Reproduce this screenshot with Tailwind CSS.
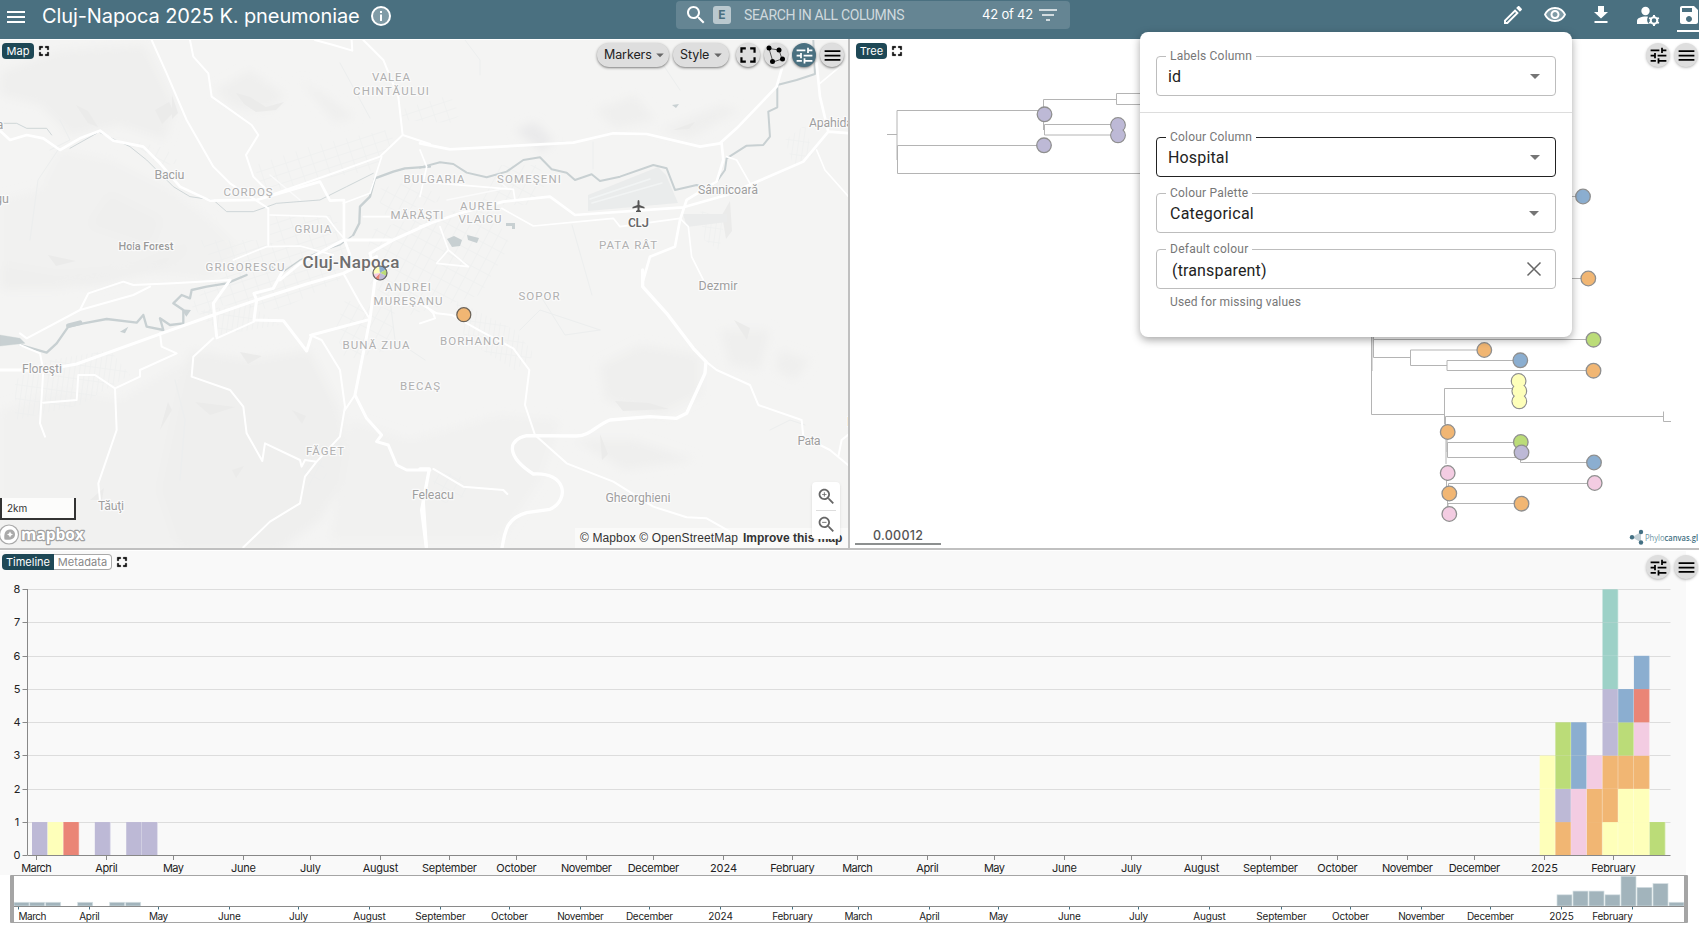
<!DOCTYPE html>
<html lang="en">
<head>
<meta charset="utf-8">
<title>Cluj-Napoca 2025 K. pneumoniae</title>
<script src="https://cdn.jsdelivr.net/npm/@tailwindcss/browser@4"></script>
</head>
<body class="w-[1699px] h-[925px] overflow-hidden bg-white font-['Inter','Liberation_Sans',sans-serif] text-[#222]">

<svg class="hidden">
  <defs>
    <symbol id="menu" viewBox="0 0 24 24"><path d="M3 18h18v-2H3v2zm0-5h18v-2H3v2zm0-7v2h18V6H3z"/></symbol>
    <symbol id="full" viewBox="0 0 24 24"><path d="M7 14H5v5h5v-2H7v-3zm-2-4h2V7h3V5H5v5zm12 7h-3v2h5v-5h-2v3zM14 5v2h3v3h2V5h-5z"/></symbol>
    <symbol id="tune" viewBox="0 0 24 24"><path d="M3 17v2h6v-2H3zM3 5v2h10V5H3zm10 16v-2h8v-2h-8v-2h-2v6h2zM7 9v2H3v2h4v2h2V9H7zm14 4v-2H11v2h10zm-6-4h2V7h4V5h-4V3h-2v6z"/></symbol>
    <symbol id="search" viewBox="0 0 24 24"><path d="M15.5 14h-.79l-.28-.27C15.41 12.59 16 11.11 16 9.5 16 5.91 13.09 3 9.5 3S3 5.91 3 9.5 5.91 16 9.5 16c1.61 0 3.09-.59 4.23-1.57l.27.28v.79l5 4.99L20.49 19l-4.99-5zm-6 0C7.01 14 5 11.99 5 9.5S7.01 5 9.5 5 14 7.01 14 9.5 11.99 14 9.5 14z"/></symbol>
    <symbol id="caret" viewBox="0 0 24 24"><path d="M7 10l5 5 5-5z"/></symbol>
  </defs>
</svg>

<div class="relative flex h-[925px] flex-col">
  <!-- Header -->
  <header class="flex h-[39px] shrink-0 items-start bg-[#4a7080] text-white">
    <div class="flex w-[676px] items-center pl-1">
      <svg class="mt-[3px] size-6 fill-white"><use href="#menu"/></svg>
      <h1 class="ml-[14px] mt-px w-[317px] whitespace-nowrap text-[20px] leading-[30px] tracking-[-0.1px]">Cluj-Napoca 2025 K. pneumoniae</h1>
      <svg class="ml-[12px] h-5 w-5 shrink-0" viewBox="0 0 20 20"><circle cx="10" cy="10" r="9" fill="#fff" fill-opacity=".3" stroke="#fff" stroke-width="2"/><path d="M9 5h2v2H9zM9 8.5h2V15H9z" fill="#fff"/></svg>
    </div>
    <div class="mt-px flex h-7 w-[394px] items-center rounded bg-white/15 pl-[8px] pr-[10px]">
      <svg class="size-6 fill-white"><use href="#search"/></svg>
      <span class="ml-[5px] flex size-[18px] items-center justify-center rounded-[3px] bg-white/55 text-[12px] font-bold text-[#4a7080]">E</span>
      <span class="ml-[13px] whitespace-nowrap font-[Roboto,sans-serif] text-[14px] tracking-[-0.33px] text-white/70">SEARCH IN ALL COLUMNS</span>
      <span class="ml-auto whitespace-nowrap text-[13px] tracking-[-0.2px]">42 of 42</span>
      <svg class="ml-[3px] size-6 fill-white/70"><path d="M10 18h4v-2h-4v2zM3 6v2h18V6H3zm3 7h12v-2H6v2z"/></svg>
    </div>
    <div class="ml-auto mt-[3px] flex w-[198px] shrink-0 gap-[18px] fill-white">
      <svg class="h-6 w-6 shrink-0" viewBox="0 0 24 24"><path d="M14.06 9.02l.92.92L5.92 19H5v-.92l9.06-9.06M17.66 3c-.25 0-.51.1-.7.29l-1.83 1.83 3.75 3.75 1.83-1.83c.39-.39.39-1.02 0-1.41l-2.34-2.34c-.2-.2-.45-.29-.71-.29zm-3.6 3.19L3 17.25V21h3.75L17.81 9.94l-3.75-3.75z"/></svg>
      <svg class="h-6 w-6 shrink-0" viewBox="0 0 24 24"><path fill-opacity=".3" d="M12 6c3.79 0 7.17 2.13 8.82 5.5C19.17 14.87 15.79 17 12 17s-7.17-2.13-8.82-5.5C4.83 8.13 8.21 6 12 6"/><path d="M12 6c3.79 0 7.17 2.13 8.82 5.5C19.17 14.87 15.79 17 12 17s-7.17-2.13-8.82-5.5C4.83 8.13 8.21 6 12 6m0-2C7 4 2.73 7.11 1 11.5 2.73 15.89 7 19 12 19s9.27-3.11 11-7.5C21.27 7.11 17 4 12 4zm0 5c1.38 0 2.5 1.12 2.5 2.5S13.38 14 12 14s-2.5-1.12-2.5-2.5S10.62 9 12 9m0-2c-2.48 0-4.5 2.02-4.5 4.5S9.52 16 12 16s4.5-2.02 4.5-4.5S14.48 7 12 7z"/></svg>
      <svg class="ml-[4px] h-6 w-6 shrink-0" viewBox="0 0 24 24"><path d="M9 3h6v6h4l-7 6.5L5 9h4zM5.500 18h13v2h-13z"/></svg>
      <svg class="ml-[5px] h-6 w-6 shrink-0" viewBox="0 0 24 24"><circle cx="9.500" cy="8" r="4.200"/><path d="M1 21v-3c0-3 4-4.500 9-4.500 1 0 1.500 0 2 .2-1.500 2.500-1 5.500 1 7.300z"/><circle cx="18" cy="17.500" r="3.300" fill="none" stroke="#fff" stroke-width="2"/><path d="M18 12v3M18 20v3M13.200 14.800l2.600 1.500M20.200 18.700l2.600 1.500M22.800 14.800l-2.600 1.500M15.800 18.700l-2.600 1.500" stroke="#fff" stroke-width="2"/></svg>
      <div class="-ml-[1px] w-6 shrink-0"><svg class="size-6" viewBox="0 0 24 24"><path d="M17 3H5c-1.110 0-2 .9-2 2v14c0 1.100.89 2 2 2h14c1.100 0 2-.9 2-2V7l-4-4zm-5 16c-1.660 0-3-1.340-3-3s1.340-3 3-3 3 1.340 3 3-1.340 3-3 3zm3-10H5V5h10v4z"/></svg><div class="mt-[3px] h-[2px] bg-white"></div></div>
    </div>
  </header>

  <div class="flex h-[509px] shrink-0">
    <!-- Map pane -->
    <section class="relative h-[509px] w-[848px] shrink-0 overflow-hidden border-t border-white bg-[#f4f4f3]">
      <svg class="absolute left-0 top-0" width="848" height="508" viewBox="0 40 848 508" fill="none" stroke-linejoin="round" stroke-linecap="round">
        <defs>
          <filter id="b" x="-20%" y="-20%" width="140%" height="140%"><feGaussianBlur stdDeviation="5"/></filter>
          <pattern id="g1" width="13" height="9" patternUnits="userSpaceOnUse" patternTransform="rotate(-18)"><path d="M0 0H13M0 0V9" stroke="#ebeeee" stroke-width="1"/></pattern>
          <pattern id="g2" width="10" height="13" patternUnits="userSpaceOnUse" patternTransform="rotate(28)"><path d="M0 0H10M0 0V13" stroke="#ebeeee" stroke-width="1"/></pattern>
          <pattern id="g3" width="5" height="14" patternUnits="userSpaceOnUse" patternTransform="rotate(8)"><path d="M0 0H5M0 0V14" stroke="#ebeeee" stroke-width="1"/></pattern>
        </defs>
        <!-- terrain -->
        <g fill="#efefee" filter="url(#b)">
          <path d="M0 72L60 50 145 45 175 105 165 140 120 125 70 135 40 105 0 95z"/>
          <path d="M215 90L250 70 285 95 270 110 235 108zM300 80l25 15 30 22-20 5z"/>
          <path d="M60 150l50 10 60 30 40 30 30 30-30 30-90-10-60 20-60 0V200l40-10z" fill="#f1f1f0"/>
          <path d="M110 195l50 25-10 25-60-20zM0 265l60 10 70-5 60-25-30 25-60 15L0 290z"/>
          <path d="M0 410l60-20 60 10 50-30 40-20 30 30 20 30 20 60-20 78H0z" fill="#f1f1f0"/>
          <path d="M190 350l60 10 60-10 30 60 10 60-30 50-40 30H180l-20-60z"/>
          <path d="M350 420l60 20 90-25 60 5-20 60-40 60H330z" fill="#f1f1f0"/>
          <path d="M600 365l40-20 60 10 0 40-40 20-55-15zM720 330l50 0-10 40-30-5zM780 350l30 10-15 20-20-10z"/>
          <path d="M595 110l40-15 20 25-40 8zM660 130l60-25 20 5-50 28zM575 440l60 0 60 20-70 10z"/>
          <path d="M515 130l20-8 18 18-10 12z" fill="#eaeaeb"/>
        </g>
        <g fill="#ebebea">
          <path d="M236 93l14 4 16 10 18-5-8 8-20 2-12-8zM76 105l12 6 10 16-10-4zM155 110l14-8 5 10-12 12zM48 255l28 6-20 5zM172 95l6 18-6 6zM195 402l40 5-25 8zM615 401l34 2 20 6-46 2zM673 130l22-8-6 7zM734 320l16 8-3 12zM600 434l8 20-6 6zM722 215l8-14 2 30-6 8zM240 352l22 4-14 8zM90 500l14-12-2 12zM160 430l8-28 4 8zM292 410l14 6-4 8zM232 470l12-4-8 12z"/>
        </g>
        <!-- street grids -->
        <path d="M370 230l60-15 60-10 20 40-30 50-70 20-45-35zM375 190l40-10 30 20-60 15z" fill="url(#g2)"/>
        <path d="M200 240l60 0 40 10 50-5-10 35-60 30-60-5-10 20-20-20 30-30zM270 215l60 0 20 20-20 20-60-15z" fill="url(#g1)"/>
        <path d="M255 165l60-20 70-15 10 10-20 30-60 10-55 15zM400 110l50-15 10 20-10 8-50-3z" fill="url(#g1)"/>
        <path d="M500 165l40 0 5 20-10 20-55 0zM345 300l50 10-5 40-45 10-10-30z" fill="url(#g2)"/>
        <path d="M50 360l60-10 20 25-50 30-65 15V380zM200 310l50-5 30 20-60 10z" fill="url(#g3)"/>
        <path d="M455 300l60 30 20 25-20 15-50-30zM700 210l25 10-6 30-15-10zM785 140l20-15 8 30-20 10z" fill="url(#g3)"/>
        <path d="M430 470l30 5 10 20-30 10zM300 460l20-5 8 22-20 10zM130 140l35 8 15 15-20 3z" fill="url(#g2)"/>
        <!-- airport -->
        <path d="M588 195l70-28 8 8 12 28-90 8z" fill="#eaecec"/>
        <path d="M590 199l60-20M592 203l70-20" stroke="#f2f4f4" stroke-width="1.500"/>
        <path d="M683 214h44v8l-40 5z" fill="#ebecec"/>
        <!-- minor roads -->
        <g stroke="#fbfbfb" stroke-width="1.500">
          <path d="M447 200l60-12-10-8M300 200l-30-25"/>
        </g>
        <g stroke="#eceeee">
          <path d="M420 143l30 7 50-3 65-5M593 142v27M572 225l20 70M540 295l25 40 35-5M520 330l20-20 60 20M390 300l5 40 30 20M30 240l8-60 20-30M340 63l30 55M480 75v-15l-15-20M660 60l20 30M60 120l10 20-20 10M175 380l10 40-5 60M770 430l20-10 15 5"/>
        </g>
        <!-- water -->
        <g stroke="#c8d0d2">
          <g transform="scale(.3333)"><path stroke-width="7" d="M1290 500L1215 505 1180 515 1125 535 1110 590 1080 620 1078 670 1060 705"/><path stroke-width="4" d="M1060 705L1020 735 960 755 900 780 850 815 790 790"/><path stroke-width="2.500" d="M0 370H50L80 385 140 385 155 405 M300 398L390 440 440 480 520 560 570 590 640 600 680 635H760L830 610 960 600 1040 560 1120 520M210 445L290 400"/></g>
          <g transform="translate(420 0) scale(.3333)"><path d="M0 503L60 487 100 492 140 518 200 532 260 515 310 480 360 472 395 508 440 518 465 540 515 523 540 543 600 530 700 495 740 505 765 570 830 555 860 565 890 545 915 510 920 475 980 437 1030 435 1050 410 1045 335 1072 322 1072 255 1130 240 1185 222 1180 120" stroke-width="6"/></g>
          <g transform="translate(0 270) scale(.3333)"><path stroke-width="7" d="M740 15L680 40 620 50 575 60 570 85 545 75 520 100 550 120 550 160 510 165 480 145 490 180 440 170 430 135 410 158 320 147 250 160 205 170 170 220 140 248 60 225"/><path stroke-width="14" d="M205 167L240 158"/><path fill="#c8d0d2" d="M0 195L60 205 75 220 0 228z"/><path fill="#c8d0d2" stroke="none" d="M545 118l28 2-14 20zM360 185l25-15-10 20z"/></g>
          <path fill="#c8d0d2" stroke="none" d="M447 239l7-3 8 4-2 6-8 1zM467 235l12 3-2 5-9-3zM672 105l7-1-3 4zM506 223h9v6h-3v-3h-6z"/>
        </g>
        <!-- roads -->
        <g stroke="#fff">
          <g transform="scale(.3333)">
            <path stroke-width="8" d="M0 392L30 420 80 405 130 415 180 450 240 415 300 392 340 422 430 440 480 490 540 560 630 602 770 600 960 545 990 602 1032 600V715L1050 765"/>
            <path stroke-width="6" d="M455 120L500 220 560 360 640 500 690 550 805 625 805 735M570 120L580 170 625 220 635 290 755 375 775 405 738 465 760 530 800 570M770 600L1000 520 1140 470 1208 405 1195 290 1150 180 1090 120M1208 405L1290 432M945 120L1000 135 1057 152 1055 120"/>
            <path stroke-width="9" d="M840 840L900 790 1030 720 1180 720 1290 670M1180 720L1110 760 1130 840"/>
            <path stroke-width="5" d="M810 645L980 650 1010 690 1032 715M700 780L800 740 900 738 1000 765M1290 650H1090M1145 470L1110 580 1030 610"/>
          </g>
          <g transform="translate(420 0) scale(.3333)">
            <path stroke-width="8" d="M0 680L120 640 250 605 390 590 465 645 790 622 920 585 1000 550 1150 485 1225 395 1290 400M1150 130L1090 190 1070 260 950 385 900 430 840 440 680 402 580 400 460 428 90 448 0 430M1190 190L1200 290 1225 395M905 430L910 480 890 545 800 600 780 660 765 740 690 770 670 840"/>
            <path stroke-width="5" d="M0 545L280 568 285 600M245 625L340 678 580 655 600 680 780 655 805 680 815 770 850 840M920 470L950 480 990 550M1190 450L1215 510 1290 595M1200 250L1260 200M0 450L20 500 0 590M60 680L85 750 145 800 50 790 85 750"/>
          </g>
          <g transform="translate(0 270) scale(.3333)">
            <path stroke-width="9" d="M0 300H130L230 282 500 185 640 135 770 90 920 42 1030 10 1130 -40M770 90L762 150 850 152 920 243 935 195 1110 148 1125 30M1110 148L1065 375 1100 445 1145 495 1130 515 1165 525 1190 585 1220 600H1290M1270 690L1280 840M770 90L762 70 820 55 850 0M690 30L640 100 650 200"/>
            <path stroke-width="6" d="M640 205L580 260 575 320 690 360 730 410 740 490 787 573 795 520 900 570 905 590 915 570 950 575 915 620 900 700 810 755 730 832M950 575L1020 500 1035 410 1020 300 965 210 930 195M1065 375L1035 420M650 205L762 155M345 355L350 480 295 640 300 690M130 300L120 460 135 500M130 398L230 390 235 315 285 315 345 355 420 320 420 300 530 250 485 230 480 190M60 190L80 205 240 120 265 70 370 35 400 45 520 40 690 30M240 120L400 75 450 50M60 225L120 250 130 300M1030 10L1080 100 1110 148"/>
          </g>
          <g transform="translate(420 270) scale(.3333)">
            <path stroke-width="10" d="M668 0V50L740 130 820 235 858 275 855 310 800 430 770 445 690 440 570 450C530 465 510 498 470 498L320 497C260 510 260 560 340 612 C440 605 450 690 390 718 L320 728C260 745 255 780 245 840M0 597H28L5 720 20 840"/>
            <path stroke-width="6" d="M0 100L50 130 95 135 185 185 280 235 328 300 315 405 345 495 440 580 580 635 700 710 800 742 860 745 930 785M858 275L890 300 990 345 1015 405 1145 450 1150 500 1230 540 1290 590M1255 560L1265 510 1290 490M40 597L130 650 250 660 262 672M0 160L45 145 40 130 0 90"/>
          </g>
        </g>
        <!-- place names -->
        <g font-family="Roboto, sans-serif" fill="#b0b0b0" stroke="#fafafa" stroke-width="2.500" paint-order="stroke" text-anchor="middle" font-size="11.500">
          <text x="391" y="81" textLength="38">VALEA</text><text x="391" y="95" textLength="76">CHINTĂULUI</text>
          <text x="248" y="196" textLength="49">CORDOŞ</text><text x="434" y="183" textLength="61">BULGARIA</text>
          <text x="529" y="183" textLength="64">SOMEŞENI</text><text x="313" y="233" textLength="37">GRUIA</text>
          <text x="417" y="219" textLength="53">MĂRĂŞTI</text><text x="480" y="210" textLength="40">AUREL</text><text x="480" y="223" textLength="43">VLAICU</text>
          <text x="628" y="249" textLength="58">PATA RÂT</text><text x="245" y="271" textLength="79">GRIGORESCU</text>
          <text x="408" y="291" textLength="46">ANDREI</text><text x="408" y="305" textLength="69">MUREŞANU</text>
          <text x="539" y="300" textLength="41">SOPOR</text><text x="472" y="345" textLength="64">BORHANCI</text>
          <text x="376" y="349" textLength="67">BUNĂ ZIUA</text><text x="420" y="390" textLength="40">BECAŞ</text><text x="325" y="455" textLength="38">FĂGET</text>
          <g font-size="12.500" fill="#9e9e9e">
            <text x="169.500" y="179" textLength="30">Baciu</text><text x="728" y="194" textLength="60">Sânnicoară</text><text x="831" y="126.500" textLength="44">Apahida</text>
            <text x="718" y="290" textLength="39">Dezmir</text><text x="42" y="373" textLength="40">Floreşti</text><text x="111" y="510" textLength="26">Tăuţi</text>
            <text x="433" y="499" textLength="42">Feleacu</text><text x="638" y="502" textLength="65">Gheorghieni</text><text x="809" y="445" textLength="23">Pata</text>
            <text x="2" y="203">gu</text><text x="0" y="129">a</text><text x="851" y="426">D</text>
          </g>
          <text x="146" y="250" font-size="11" font-weight="500" fill="#999" textLength="55">Hoia Forest</text>
          <text x="351" y="268" font-size="17" font-weight="500" fill="#6e6e6e" textLength="97">Cluj-Napoca</text>
          <text x="638.500" y="227" font-size="13" font-weight="500" fill="#666" textLength="21">CLJ</text>
        </g>
        <path d="M638.500 200q1 0 1 2v3l5 2v1.500l-5-1v2.500l1.500 1v1h-5v-1l1.500-1v-2.500l-5 1V207l5-2v-3q0-2 1-2z" fill="#555"/>
        <!-- markers -->
        <g transform="translate(380 273)">
          <path d="M0 0L-7 1A7 7 0 0 1 -1 -7z" fill="#feffba"/><path d="M0 0L-1 -7A7 7 0 0 1 6 -3.500z" fill="#8baed0"/><path d="M0 0L6 -3.500A7 7 0 0 1 6.500 3z" fill="#bbdc78"/><path d="M0 0L6.500 3A7 7 0 0 1 -1 7z" fill="#bdb9d6"/><path d="M0 0L-1 7A7 7 0 0 1 -5 5z" fill="#ea8576"/><path d="M0 0L-5 5A7 7 0 0 1 -7 1z" fill="#f3cce2"/>
          <circle r="7" stroke="#666" stroke-width="1.200"/>
        </g>
        <circle cx="463.800" cy="314.700" r="7" fill="#f1b673" stroke="#6b6257" stroke-width="1.200"/>
        <!-- mapbox logo -->
        <circle cx="9" cy="534.500" r="9.500" fill="#fff" stroke="#aaa" stroke-width="1.200"/>
        <path d="M4.500 539.500c-1-6 1-10 5.500-10 3 0 5 2 5 5 0 4.500-4.500 6-10.500 5z" fill="#aaa"/><path d="M10 531.500l1 2 2 1-2 1-1 2-1-2-2-1 2-1z" fill="#fff"/>
        <text x="21" y="539.500" font-family="Open Sans, sans-serif" font-weight="700" font-size="16" fill="#fff" stroke="#a0a0a0" stroke-width="2.400" paint-order="stroke" textLength="63" lengthAdjust="spacingAndGlyphs">mapbox</text>
      </svg>

      <!-- pane overlays -->
      <div class="absolute inset-x-0 top-[3px] flex items-start justify-between pl-[2px] pr-1">
        <div class="flex items-center gap-px"><span class="flex h-4 w-8 items-center justify-center rounded bg-[#1e4856] text-[11px] text-white">Map</span><svg class="ml-px size-[16px] fill-black stroke-black stroke-[0.7px]"><use href="#full"/></svg></div>
        <div class="flex gap-1 fill-black">
          <button class="flex h-6 w-[72px] items-center rounded-full bg-[#dedede] pl-[7px] text-[12.5px] tracking-[-0.1px] shadow-sm shadow-black/40">Markers<svg class="-ml-px size-[18px] shrink-0 fill-[#666]"><use href="#caret"/></svg></button>
          <button class="mr-[3px] flex h-6 w-[56px] items-center rounded-full bg-[#dedede] pl-[7px] text-[12.5px] tracking-[-0.1px] shadow-sm shadow-black/40">Style<svg class="size-[18px] shrink-0 fill-[#666]"><use href="#caret"/></svg></button>
          <span class="flex size-6 items-center justify-center rounded-full bg-[#dedede] shadow-sm shadow-black/40"><svg class="size-6" viewBox="1 1 22 22"><use href="#full" width="24" height="24"/></svg></span>
          <span class="flex size-6 items-center justify-center rounded-full bg-[#dedede] shadow-sm shadow-black/40"><svg class="size-6" viewBox="0 0 24 24"><path d="M5 5.500L15 7l3 9-9 3z" fill="none" stroke="#555"/><circle cx="5" cy="5" r="2.500"/><circle cx="15" cy="7" r="2.500"/><circle cx="18.500" cy="16" r="2.500"/><circle cx="8.500" cy="18.500" r="2.500"/></svg></span>
          <span class="flex size-6 items-center justify-center rounded-full bg-[#4a7080] fill-white shadow-sm shadow-black/40"><svg class="size-[21px]"><use href="#tune"/></svg></span>
          <span class="flex size-6 items-center justify-center rounded-full bg-[#dedede] shadow-sm shadow-black/40"><svg class="size-[21px]"><use href="#menu"/></svg></span>
        </div>
      </div>
      <div class="absolute left-0 top-[458px] h-[22px] w-[76px] border-2 border-t-0 border-[#333] bg-white/75 pl-[5px] text-[10px] leading-[21px] text-[#333]">2km</div>
      <div class="absolute bottom-0 right-0 flex h-5 w-[273px] items-center bg-white/50 pl-[5px] font-['Liberation_Sans'] text-[12px] leading-5 text-[#333]"><span class="whitespace-nowrap tracking-[0.12px]">© Mapbox © OpenStreetMap</span><b class="ml-[5px] whitespace-nowrap">Improve this map</b></div>
      <div class="absolute right-2 top-[442px] flex h-[57px] w-7 flex-col items-center justify-between rounded-sm bg-white py-[4px] shadow fill-[#666]">
        <svg class="size-[21px]" viewBox="0 0 24 24"><use href="#search" width="24" height="24"/><path d="M12 10h-2v2H9v-2H7V9h2V7h1v2h2v1z"/></svg>
        <div class="h-px w-5 bg-[#ddd]"></div>
        <svg class="size-[21px]" viewBox="0 0 24 24"><use href="#search" width="24" height="24"/><path d="M7 9h5v1H7z"/></svg>
      </div>
    </section>

    <div class="w-[2px] bg-[#c0c0c0]"></div>

    <!-- Tree pane -->
    <section class="relative h-[509px] w-[849px] overflow-hidden bg-white">
      <svg class="absolute left-0 top-0" width="849" height="509" viewBox="850 39 849 509" id="tree" fill="none"></svg>
      <div class="absolute inset-x-0 top-1 flex items-start justify-between pl-[6px] pr-px">
        <div class="flex items-center gap-px"><span class="flex h-4 w-[31px] items-center justify-center rounded bg-[#1e4856] text-[11px] text-white">Tree</span><svg class="ml-px size-[16px] fill-black stroke-black stroke-[0.7px]"><use href="#full"/></svg></div>
        <div class="flex gap-1 fill-black">
          <span class="flex size-6 items-center justify-center rounded-full bg-[#dedede] shadow-sm shadow-black/20"><svg class="size-[21px]"><use href="#tune"/></svg></span>
          <span class="flex size-6 items-center justify-center rounded-full bg-[#dedede] shadow-sm shadow-black/20"><svg class="size-[21px]"><use href="#menu"/></svg></span>
        </div>
      </div>
    </section>
  </div>

  <div class="h-[2px] shrink-0 bg-[#c0c0c0]"></div>

  <!-- Timeline pane -->
  <section class="relative h-[375px] w-[1699px] bg-white pt-px">
    <div class="h-[324px] w-[1686px] bg-[#f9f9f9]"></div>
    <svg class="absolute left-0 top-0" width="1699" height="375" viewBox="0 550 1699 375" id="tl"></svg>
    <div class="absolute inset-x-0 top-[4px] flex items-start justify-between pl-[2px] pr-px">
      <div class="flex items-center text-[11px]"><span class="flex h-4 w-[52px] items-center justify-center rounded-l bg-[#1e4856] text-white">Timeline</span><span class="flex h-4 w-[58px] items-center justify-center rounded-r border border-l-0 border-[#aaa] bg-white tracking-[0.1px] text-[#888]">Metadata</span><svg class="ml-[2px] size-[16px] fill-black stroke-black stroke-[0.7px]"><use href="#full"/></svg></div>
      <div class="mt-px flex gap-1 fill-black">
        <span class="flex size-6 items-center justify-center rounded-full bg-[#dedede] shadow-sm shadow-black/20"><svg class="size-[21px]"><use href="#tune"/></svg></span>
        <span class="flex size-6 items-center justify-center rounded-full bg-[#dedede] shadow-sm shadow-black/20"><svg class="size-[21px]"><use href="#menu"/></svg></span>
      </div>
    </div>
  </section>

  <!-- Settings popup -->
  <div class="absolute left-[1140px] top-8 h-[305px] w-[432px] rounded-lg bg-white font-[Roboto,sans-serif] text-[16px] text-[#222] shadow-[0_3px_8px_rgba(0,0,0,0.35)]">
    <div class="border-b border-[#ddd] px-4 pb-4 pt-6">
      <div class="relative flex h-10 items-center rounded border border-[#bdbdbd] pl-[11px] pr-2"><span class="pt-[2px]">id</span><span class="absolute -top-[8px] left-[9px] bg-white px-[4px] text-[12px] leading-[14px] tracking-[0.2px] text-[#777]">Labels Column</span><svg class="ml-auto size-6 fill-[#757575]"><use href="#caret"/></svg></div>
    </div>
    <div class="flex flex-col gap-4 px-4 pt-6">
      <div class="relative flex h-10 items-center rounded border border-[#222] pl-[11px] pr-2"><span class="pt-[2px] tracking-[0.15px]">Hospital</span><span class="absolute -top-[8px] left-[9px] bg-white px-[4px] text-[12px] leading-[14px] tracking-[0.2px] text-[#777]">Colour Column</span><svg class="ml-auto size-6 fill-[#757575]"><use href="#caret"/></svg></div>
      <div class="relative flex h-10 items-center rounded border border-[#bdbdbd] pl-[13px] pr-[9px]"><span class="pt-[2px] tracking-[0.25px]">Categorical</span><span class="absolute -top-[8px] left-[9px] bg-white px-[4px] text-[12px] leading-[14px] tracking-[0.2px] text-[#777]">Colour Palette</span><svg class="ml-auto size-6 fill-[#757575]"><use href="#caret"/></svg></div>
      <div class="relative flex h-10 items-center rounded border border-[#bdbdbd] pl-[15px] pr-[9px]"><span class="pt-[3px] tracking-[0.15px]">(transparent)</span><span class="absolute -top-[8px] left-[9px] bg-white px-[4px] text-[12px] leading-[14px] tracking-[0.25px] text-[#777]">Default colour</span><svg class="ml-auto size-6" viewBox="0 0 24 24"><path d="M5.500 5.500l13 13M18.500 5.500l-13 13" stroke="#666" stroke-width="1.500"/></svg></div>
      <div class="-mt-[10px] pl-[14px] text-[12px] leading-[14px] tracking-[0.15px] text-[#777]">Used for missing values</div>
    </div>
  </div>
</div>

<script>
const C={t:'#9dd1c7',v:'#bdb9d6',y:'#feffba',b:'#8baed0',g:'#bbdc78',o:'#f1b673',p:'#f3cce2',r:'#ea8576'};
// Tree: branches, then leaf nodes
const paths=['M887 134.500H897','M1038 110.500H897V160','M1038 145.500H897.500V173.500H1145','M1043.500 130V99.500H1116','M1145 93.500H1116.500V104.500H1145','M1112 124.500H1044.500V135H1112','M1570 196.500H1578','M1570 278.500H1582',
'M1371.500 330V414.500H1444.500','M1372 330V371','M1373.500 330V357.500H1410.500','M1374 339.500H1587','M1478 350H1410.500V365.500H1447','M1514 360.500H1447V370.500H1587','M1513 388.500H1444.500V424','M1663.500 411.500V421.500H1671','M1445.500 432V416.500H1663.500','M1446 436V464','M1447 440V452','M1514 442.500H1447.500V457.500H1520.500V462.500H1588','M1446.500 478V490','M1588 483.500H1448.500V488','M1447.500 498V510','M1515 503.500H1448V508'];
const nodes=[[1044.5,114.3,'v'],[1044,145.3,'v'],[1118,125,'v'],[1118,135.3,'v'],[1583,196.5,'b'],[1588.3,278.5,'o'],[1593.5,339.7,'g'],[1484.3,350,'o'],[1520.3,360.3,'b'],[1593.5,370.7,'o'],[1518.6,381,'y'],[1519.3,391,'y'],[1519.3,401.3,'y'],[1447.7,432,'o'],[1520.8,442,'g'],[1521.5,452.5,'v'],[1594,462.5,'b'],[1594.7,483,'p'],[1447.7,473,'p'],[1449.3,493.5,'o'],[1521.5,503.7,'o'],[1449.3,514,'p']];
const circ=(n,a)=>`<circle cx="${n[0]}" cy="${n[1]}" ${a}/>`;
let s=paths.map(d=>`<path d="${d}" stroke="#b4b4b4"/>`).join('')+nodes.map((n,i)=>circ(n,`r="7.3" fill="${C[n[2]]}" stroke="#8f8f8f" stroke-width="1.3"`)).join('');
// chained siblings of one colour merge into a single blob
[[2,3],[10,11,12]].forEach(g=>g.forEach(i=>{s+=circ(nodes[i],`r="6.6" fill="${C[nodes[i][2]]}"`)}));
s+='<text x="898" y="540.300" text-anchor="middle" font-family="Inter" font-size="12.500" font-weight="500" fill="#555" textLength="50">0.00012</text><path d="M855 544H941" stroke="#8c8f8f" stroke-width="2"/>';
s+='<g fill="#437083"><path d="M1632 537.300L1641 532V542.500z" fill="#c3d0d6"/><circle cx="1632" cy="537.300" r="2.200"/><circle cx="1641" cy="532" r="2.200"/><circle cx="1641" cy="542.500" r="2.200"/></g><text x="1645" y="540.500" font-family="Open Sans" font-size="9.500" fill="#6c96a5" textLength="53" lengthAdjust="spacingAndGlyphs">Phylo<tspan fill="#437083" font-weight="600">canvas.gl</tspan></text>';
document.getElementById('tree').innerHTML=s;
// Timeline
const M=['March','April','May','June','July','August','September','October','November','December','2024','February','March','April','May','June','July','August','September','October','November','December','2025','February'];
const W={March:30.5,April:22.5,May:21,June:25,July:21,August:35.5,September:55,October:40.5,November:51,December:51.5,'2024':27,'2025':27,February:44.5};
const X1=[36.5,106.5,173.5,243.5,310.5,380.5,449.5,516.5,586.5,653.5,723.5,792.5,857.5,927.5,994.5,1064.5,1131.5,1201.5,1270.5,1337.5,1407.5,1474.5,1544.5,1613.5];
const X2=[18.5,89.5,158.5,229.5,298.5,369.5,440.5,509.5,580.5,649.5,720.5,792.5,858.5,929.5,998.5,1069.5,1138.5,1209.5,1281.5,1350.5,1421.5,1490.5,1561.5,1632.5];
s='';
for(let i=0;i<=8;i++){const y=Math.round(855-i*33.25)+.5;if(i)s+=`<path d="M27 ${y}H1670.500" stroke="#ddd"/>`;s+=`<path d="M22.500 ${y}H27" stroke="#888"/><text x="17" y="${y+3.5}" text-anchor="middle" font-size="11">${i}</text>`;}
const bars={0:'v',1:'y',2:'r',4:'v',6:'v',7:'v',96:'yyy',97:'ovgg',98:'ppbb',99:'oop',100:'yoovvttt',101:'yyogb',102:'yyoprb',103:'g'};
for(const k in bars){const x=32+k*15.705;[...bars[k]].forEach((c,j)=>{s+=`<rect x="${x}" y="${855.3-(j+1)*33.25}" width="15.7" height="33.3" fill="${C[c]}"/>`});s+=`<path d="M${x+15.5} ${855-bars[k].length*33.25}V855" stroke="#fff" stroke-opacity=".35"/>`;}
s+='<path d="M27.500 589V855.500H1670.500" fill="none" stroke="#888"/>';
X1.forEach((x,i)=>{s+=`<path d="M${x} 856V860" stroke="#888"/><text x="${x}" y="872" text-anchor="middle" font-size="11" textLength="${W[M[i]]}">${M[i]}</text>`});
s+='<rect x="12" y="875.500" width="1674" height="47" fill="#fff" stroke="#a5a5a5"/>';
[[14,1],[29.7,1],[45.7,1],[77.7,1],[109.7,1],[125.7,1],[1557,3],[1573,4],[1589,4],[1605,3],[1621,8],[1637,5],[1653,6],[1669,1]].forEach(([x,n])=>{s+=`<rect x="${x}" y="${906-n*3.73}" width="15" height="${n*3.73}" fill="#a2b4bc" stroke="#d5dfe3" stroke-width=".7"/>`});
s+='<path d="M14 906.500H1684" stroke="#8a8a8a"/>';
X2.forEach((x,i)=>{const c=i==0?32.5:i==23?1612.5:x;s+=`<path d="M${x} 907V909.500" stroke="#437083"/><text x="${c}" y="920" text-anchor="middle" font-size="10" textLength="${W[M[i]]*.915}">${M[i]}</text>`});
s+='<rect x="10" y="875" width="4" height="48" rx="1" fill="#a5a5a5"/><rect x="1684" y="875" width="4" height="48" rx="1" fill="#a5a5a5"/>';
const tl=document.getElementById('tl');tl.setAttribute('font-family','Inter');tl.setAttribute('fill','#222');tl.innerHTML=s;
</script>
</body>
</html>
